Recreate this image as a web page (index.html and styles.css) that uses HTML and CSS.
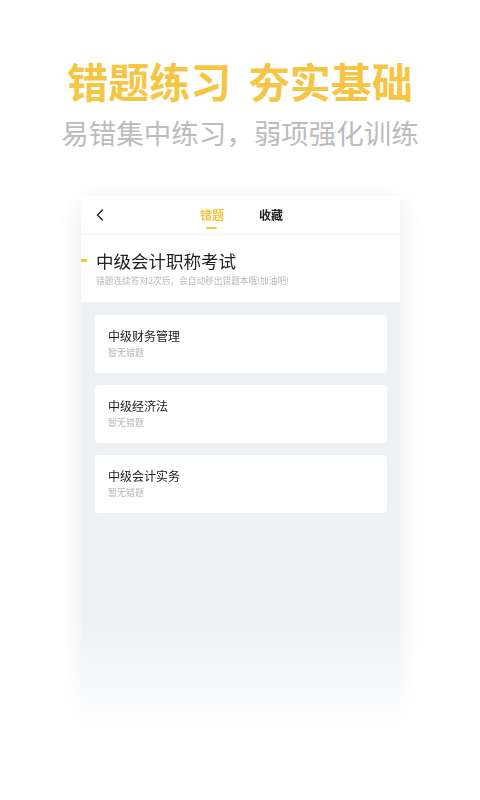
FILE: index.html
```html
<!DOCTYPE html>
<html>
<head>
  <meta charset="utf-8">
  <title>错题练习</title>
  <link rel="stylesheet" href="styles.css">
</head>
<body>
  <h1 class="hero-title">错题练习 夯实基础</h1>
  <div class="hero-sub">易错集中练习，弱项强化训练</div>

  <div class="phone-wrap">
    <div class="phone">
      <div class="navbar">
        <svg class="back" width="8" height="12" viewBox="0 0 8 12">
          <path d="M6.5 1 L1.5 6 L6.5 11" fill="none" stroke="#222" stroke-width="1.4" stroke-linecap="round" stroke-linejoin="round"/>
        </svg>
        <div class="tabs">
          <div class="tab tab-active">错题</div>
          <div class="tab">收藏</div>
        </div>
      </div>

      <div class="exam-head">
        <div class="exam-title">中级会计职称考试</div>
        <div class="exam-tip">错题连续答对2次后，会自动移出错题本哦!加油吧!</div>
      </div>

      <div class="subject-list">
        <div class="subject">
          <div class="subject-name">中级财务管理</div>
          <div class="subject-count">暂无错题</div>
        </div>
        <div class="subject">
          <div class="subject-name">中级经济法</div>
          <div class="subject-count">暂无错题</div>
        </div>
        <div class="subject">
          <div class="subject-name">中级会计实务</div>
          <div class="subject-count">暂无错题</div>
        </div>
      </div>
    </div>
  </div>
</body>
</html>
```

FILE: styles.css
```css
html, body {
  margin: 0;
  padding: 0;
  background: #fff;
  font-family: "Noto Sans CJK SC", "Noto Sans", sans-serif;
  overflow: hidden;
  height: 800px;
}

.hero-title {
  margin: 56px 0 0;
  font-size: 41px;
  line-height: 48px;
  font-weight: bold;
  word-spacing: 8px;
  color: #f6c544;
  text-align: center;
}

.hero-sub {
  margin-top: 11px;
  font-size: 27.5px;
  line-height: 34px;
  color: #bcbcbc;
  text-align: center;
}

.phone-wrap {
  margin-top: 17px;
  padding: 30px 0;
  -webkit-mask-image: linear-gradient(to bottom, #000 457px, transparent 569px);
  mask-image: linear-gradient(to bottom, #000 457px, transparent 569px);
}

.phone {
  width: 319px;
  height: 544px;
  margin: 0 auto 0 81px;
  background: #eef1f4;
  box-shadow: 0 6px 26px rgba(0, 0, 0, 0.09);
}

.navbar {
  position: relative;
  height: 38px;
  background: #fff;
  border-bottom: 1px solid #f3f3f3;
  display: flex;
  align-items: center;
  justify-content: center;
}

.back {
  position: absolute;
  left: 15px;
  top: 13px;
}

.tabs {
  display: flex;
  gap: 35px;
  margin-left: 2px;
}

.tab {
  position: relative;
  font-size: 12px;
  line-height: 16px;
  font-weight: bold;
  color: #222;
}

.tab-active {
  color: #f6c544;
}

.tab-active::after {
  content: "";
  position: absolute;
  left: 6px;
  right: 7px;
  bottom: -6px;
  height: 2px;
  border-radius: 1px;
  background: #f6c544;
}

.exam-head {
  position: relative;
  background: #fff;
  padding: 14px 15px 15px;
}

.exam-head::before {
  content: "";
  position: absolute;
  left: 0;
  top: 24px;
  width: 6px;
  height: 3px;
  background: #f6c544;
}

.exam-title {
  font-size: 17.5px;
  line-height: 24px;
  color: #222;
}

.exam-tip {
  margin-top: 1px;
  font-size: 8.7px;
  line-height: 13px;
  color: #b8b8b8;
}

.subject-list {
  padding: 13px 13px 0 14px;
  display: flex;
  flex-direction: column;
  gap: 12px;
}

.subject {
  background: #fff;
  border-radius: 4px;
  padding: 13px 13px 13px;
}

.subject-name {
  font-size: 12px;
  line-height: 16px;
  color: #222;
}

.subject-count {
  margin-top: 2px;
  font-size: 9px;
  line-height: 14px;
  color: #b5b5b5;
}
```
